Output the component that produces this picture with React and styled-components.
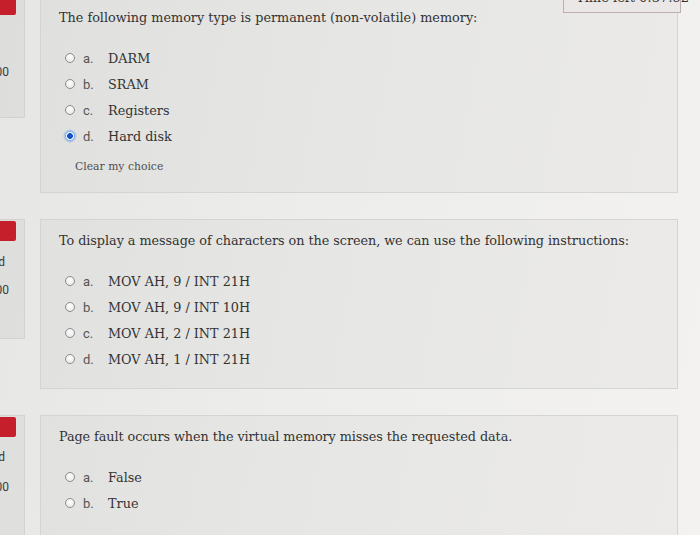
import React from "react";
import styled, { createGlobalStyle, css } from "styled-components";

const GlobalStyle = createGlobalStyle`
  html, body {
    margin: 0;
    height: 100%;
    overflow: hidden;
  }
  body {
    background: linear-gradient(100deg, #e6e6e4 0%, #ededeb 45%, #f3f2f0 100%);
    font-family: "DejaVu Serif", "Liberation Serif", serif;
    color: #373737;
  }
`;

// the page is scrolled a little down and to the right, like in the photo
const Page = styled.div`
  position: relative;
  margin: -4px 0 0 -80px;
  padding-right: 22px;
  display: flex;
  flex-direction: column;
  gap: 26px;
`;

const Row = styled.div`
  display: flex;
  align-items: flex-start;
  gap: 15px;
`;

const Info = styled.div`
  width: 105px;
  flex-shrink: 0;
  overflow: hidden;
  height: ${(p) => p.$height}px;
  box-sizing: border-box;
  background: rgba(0, 0, 0, 0.035);
  border: 1px solid #d2d2d0;
  padding-top: 1px;
  display: flex;
  flex-direction: column;
  align-items: flex-end;
  font-family: "Roboto", "Liberation Sans", sans-serif;
  font-size: 12px;
  color: #3a3a3a;
`;

const Flag = styled.div`
  align-self: stretch;
  height: ${(p) => p.$height}px;
  margin-right: 8px;
  background: #c41f2b;
  border-radius: 0 2px 2px 0;
`;

const InfoLine = styled.div`
  white-space: nowrap;
  line-height: 16px;
  margin-top: ${(p) => p.$gap}px;
  margin-right: ${(p) => p.$right}px;
`;

const Card = styled.div`
  flex: 1;
  min-width: 0;
  min-height: ${(p) => p.$minHeight || 0}px;
  box-sizing: border-box;
  background: rgba(0, 0, 0, 0.028);
  border: 1px solid #d4d4d2;
  padding: 11px 18px 16px 18px;
`;

const Question = styled.div`
  font-size: 12.8px;
  line-height: 20px;
  color: #333;
  white-space: nowrap;
  letter-spacing: ${(p) => p.$ls || 0}px;
`;

const Options = styled.div`
  margin-top: 17px;
  padding-left: 6px;
`;

const Option = styled.label`
  display: flex;
  align-items: center;
  height: 26px;
`;

const Radio = styled.span`
  width: 10px;
  height: 10px;
  box-sizing: border-box;
  border-radius: 50%;
  border: 1px solid #8d8d8d;
  background: radial-gradient(circle at 50% 35%, #ffffff, #e4e4e4);
  margin-right: 8px;
  flex-shrink: 0;
  ${(p) =>
    p.$checked &&
    css`
      border: 1px solid #7aa7e8;
      background: radial-gradient(circle, #1450c8 0 2.6px, #ffffff 3.2px);
      box-shadow: 0 0 0 1.5px rgba(120, 170, 240, 0.45);
    `}
`;

const Num = styled.span`
  width: 25px;
  font-family: "Roboto", "Liberation Sans", sans-serif;
  font-size: 13px;
  color: #555;
`;

const Answer = styled.span`
  font-size: 12.8px;
  color: #333;
`;

const Clear = styled.div`
  margin: 9px 0 0 16px;
  line-height: 18px;
  font-size: 10.8px;
  color: #4f4f4f;
`;

const Timer = styled.div`
  position: absolute;
  top: -19px;
  right: 19px;
  width: 118px;
  height: 36px;
  box-sizing: border-box;
  border: 1px solid #bfaeae;
  background: #ebe7e6;
  font-size: 13px;
  line-height: 18px;
  padding: 11px 0 0 12px;
  white-space: nowrap;
  color: #333;
`;

const questions = [
  {
    text: "The following memory type is permanent (non-volatile) memory:",
    ls: 0,
    options: ["DARM", "SRAM", "Registers", "Hard disk"],
    checked: 3,
    clear: true,
    info: { height: 122, flag: 17, lines: [{ text: "Marked out of 1.00", gap: 49, right: 15 }] },
  },
  {
    text: "To display a message of characters on the screen, we can use the following instructions:",
    ls: -0.05,
    options: ["MOV AH, 9 / INT 21H", "MOV AH, 9 / INT 10H", "MOV AH, 2 / INT 21H", "MOV AH, 1 / INT 21H"],
    checked: -1,
    info: {
      height: 120,
      flag: 20,
      lines: [
        { text: "Answer saved", gap: 13, right: 19 },
        { text: "Marked out of 1.00", gap: 12, right: 15 },
      ],
    },
  },
  {
    text: "Page fault occurs when the virtual memory misses the requested data.",
    ls: -0.08,
    options: ["False", "True"],
    checked: -1,
    minHeight: 170,
    info: {
      height: 130,
      flag: 20,
      lines: [
        { text: "Answer saved", gap: 12, right: 19 },
        { text: "Marked out of 1.00", gap: 14, right: 15 },
      ],
    },
  },
];

const letters = ["a.", "b.", "c.", "d."];

export default function App() {
  return (
    <>
      <GlobalStyle />
      <Page>
        <Timer>Time left 0:37:52</Timer>
        {questions.map((q, i) => (
          <Row key={i}>
            <Info $height={q.info.height}>
              <Flag $height={q.info.flag} />
              {q.info.lines.map((l, j) => (
                <InfoLine key={j} $gap={l.gap} $right={l.right}>
                  {l.text}
                </InfoLine>
              ))}
            </Info>
            <Card $minHeight={q.minHeight}>
              <Question $ls={q.ls}>{q.text}</Question>
              <Options>
                {q.options.map((o, j) => (
                  <Option key={j}>
                    <Radio $checked={q.checked === j} />
                    <Num>{letters[j]}</Num>
                    <Answer>{o}</Answer>
                  </Option>
                ))}
              </Options>
              {q.clear && <Clear>Clear my choice</Clear>}
            </Card>
          </Row>
        ))}
      </Page>
    </>
  );
}
